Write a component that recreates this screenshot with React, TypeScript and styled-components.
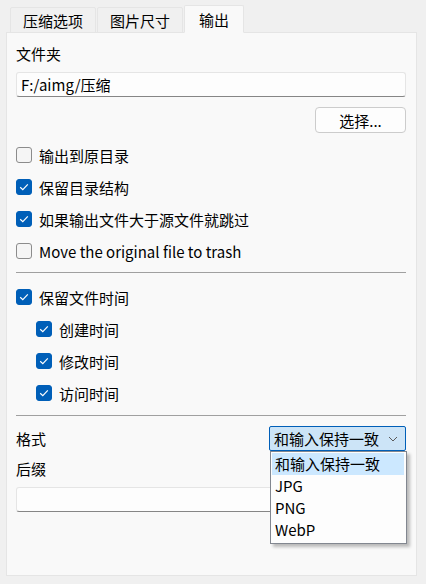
import React from 'react';
import styled, { createGlobalStyle } from 'styled-components';

const GlobalStyle = createGlobalStyle`
  html, body {
    margin: 0;
    padding: 0;
    background: #f0f0f0;
  }
  body {
    font-family: "Noto Sans CJK SC", "Noto Sans", sans-serif;
    font-size: 15px;
    color: #000;
  }
`;

const Window = styled.div`
  width: 426px;
  height: 584px;
  box-sizing: border-box;
  padding: 6px 9px 0 6px;
  display: flex;
  flex-direction: column;
`;

const TabBar = styled.div`
  display: flex;
  align-items: flex-end;
  padding-left: 4px;
  height: 27px;
  position: relative;
  z-index: 1;
  margin-bottom: -1px;
`;

const Tab = styled.div<{ $active?: boolean }>`
  box-sizing: border-box;
  height: ${({ $active }) => ($active ? '28px' : '26px')};
  padding: 0 ${({ $active }) => ($active ? '14px' : '12px')};
  margin-right: ${({ $active }) => ($active ? '0' : '1px')};
  display: flex;
  align-items: center;
  border: 1px solid #e5e5e5;
  border-bottom: ${({ $active }) => ($active ? '1px solid #f9f9f9' : '1px solid #e5e5e5')};
  background: ${({ $active }) => ($active ? '#f9f9f9' : '#f0f0f0')};
  border-radius: 2px 2px 0 0;
  line-height: 1;
`;

const Panel = styled.div`
  box-sizing: border-box;
  height: 544px;
  border: 1px solid #e5e5e5;
  background: #f9f9f9;
  padding: 10px 10px 0 9px;
  display: flex;
  flex-direction: column;
  position: relative;
`;

const Label = styled.div`
  height: 22px;
  line-height: 22px;
`;

const TextInput = styled.div<{ $gap: number }>`
  box-sizing: border-box;
  margin-top: ${({ $gap }) => $gap}px;
  height: 25px;
  border: 1px solid #e5e5e5;
  border-bottom-color: #868686;
  border-radius: 3px;
  background: #fdfdfd;
  padding: 0 4px;
  display: flex;
  align-items: center;
`;

const ButtonRow = styled.div`
  display: flex;
  justify-content: flex-end;
  margin-top: 10px;
`;

const Button = styled.button`
  box-sizing: border-box;
  width: 91px;
  height: 26px;
  border: 1px solid #cccccc;
  border-radius: 4px;
  background: #fdfdfd;
  font: inherit;
  color: inherit;
  padding: 0;
`;

const Group = styled.div<{ $gap: number }>`
  margin-top: ${({ $gap }) => $gap}px;
  display: flex;
  flex-direction: column;
`;

const CheckRow = styled.label<{ $indent?: boolean }>`
  height: 32px;
  display: flex;
  align-items: center;
  gap: 7px;
  padding-left: ${({ $indent }) => ($indent ? '20px' : '0')};
`;

const Box = styled.span<{ $checked: boolean }>`
  box-sizing: border-box;
  width: 16px;
  height: 16px;
  border-radius: 3px;
  flex-shrink: 0;
  display: flex;
  align-items: center;
  justify-content: center;
  border: 1px solid ${({ $checked }) => ($checked ? '#005fb8' : '#8c8c8c')};
  background: ${({ $checked }) => ($checked ? '#005fb8' : '#f5f5f5')};
`;

const Separator = styled.div<{ $gap: number }>`
  margin-top: ${({ $gap }) => $gap}px;
  height: 1px;
  background: #a0a0a0;
`;

const FieldRow = styled.div`
  margin-top: 10px;
  height: 25px;
  display: flex;
  align-items: center;
  justify-content: space-between;
  position: relative;
`;

const Combo = styled.div`
  box-sizing: border-box;
  width: 137px;
  height: 25px;
  border: 1px solid #005fb8;
  border-radius: 2px;
  background: #cce4f7;
  padding: 0 7px 0 4px;
  display: flex;
  align-items: center;
  justify-content: space-between;
`;

const Dropdown = styled.div`
  position: absolute;
  top: 25px;
  right: -1px;
  width: 137px;
  box-sizing: border-box;
  border: 1px solid #828790;
  background: #fdfdfd;
  padding: 1px 2px 2px 1px;
  box-shadow: 3px 3px 3px rgba(0, 0, 0, 0.25);
  z-index: 5;
`;

const Option = styled.div<{ $selected?: boolean }>`
  height: 22px;
  line-height: 22px;
  padding-left: 3px;
  background: ${({ $selected }) => ($selected ? '#cce8ff' : 'transparent')};
`;

const SuffixLabel = styled(Label)`
  margin-top: 7px;
`;

const Check = () => (
  <svg width="10" height="8" viewBox="0 0 10 8">
    <path d="M1.2 4.2 L3.8 6.6 L8.8 1.4" fill="none" stroke="#fff" strokeWidth="1.2" />
  </svg>
);

const Chevron = () => (
  <svg width="10" height="6" viewBox="0 0 10 6">
    <path d="M1 1 L5 5 L9 1" fill="none" stroke="#5a5a5a" strokeWidth="1" />
  </svg>
);

type Item = { text: string; checked: boolean; indent?: boolean };

const Checkbox: React.FC<Item> = ({ text, checked, indent }) => (
  <CheckRow $indent={indent}>
    <Box $checked={checked}>{checked && <Check />}</Box>
    <span>{text}</span>
  </CheckRow>
);

const outputOptions: Item[] = [
  { text: '输出到原目录', checked: false },
  { text: '保留目录结构', checked: true },
  { text: '如果输出文件大于源文件就跳过', checked: true },
  { text: 'Move the original file to trash', checked: false },
];

const timeOptions: Item[] = [
  { text: '保留文件时间', checked: true },
  { text: '创建时间', checked: true, indent: true },
  { text: '修改时间', checked: true, indent: true },
  { text: '访问时间', checked: true, indent: true },
];

const formats = ['和输入保持一致', 'JPG', 'PNG', 'WebP'];

export default function App() {
  return (
    <>
      <GlobalStyle />
      <Window>
        <TabBar>
          <Tab>压缩选项</Tab>
          <Tab>图片尺寸</Tab>
          <Tab $active>输出</Tab>
        </TabBar>
        <Panel>
          <Label>文件夹</Label>
          <TextInput $gap={7}>F:/aimg/压缩</TextInput>
          <ButtonRow>
            <Button>选择...</Button>
          </ButtonRow>
          <Group $gap={6}>
            {outputOptions.map((o) => (
              <Checkbox key={o.text} {...o} />
            ))}
          </Group>
          <Separator $gap={5} />
          <Group $gap={8}>
            {timeOptions.map((o) => (
              <Checkbox key={o.text} {...o} />
            ))}
          </Group>
          <Separator $gap={6} />
          <FieldRow>
            <span>格式</span>
            <Combo>
              <span>{formats[0]}</span>
              <Chevron />
            </Combo>
            <Dropdown>
              {formats.map((f, i) => (
                <Option key={f} $selected={i === 0}>
                  {f}
                </Option>
              ))}
            </Dropdown>
          </FieldRow>
          <SuffixLabel>后缀</SuffixLabel>
          <TextInput $gap={7} />
        </Panel>
      </Window>
    </>
  );
}
